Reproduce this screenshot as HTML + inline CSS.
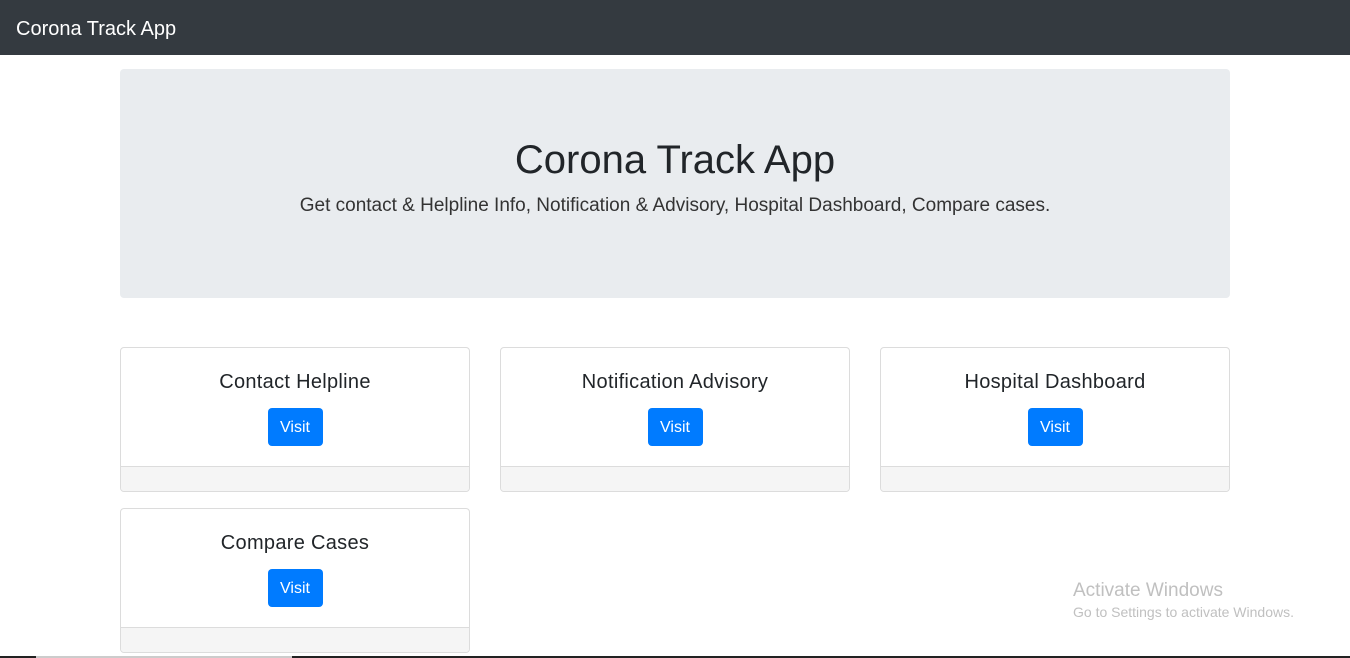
<!DOCTYPE html>
<html><head><style>
*{box-sizing:border-box;margin:0;padding:0}
body{width:1350px;height:658px;overflow:hidden;background:#fff;font-family:"Liberation Sans",sans-serif;color:#212529;position:relative}
.nav{height:55px;background:#343a40;color:#fff;font-size:20px;padding:17px 16px;line-height:24px}
.jumbo{position:absolute;left:120px;top:69px;width:1110px;height:229px;background:#e9ecef;border-radius:4px;text-align:center}
.jumbo h1{font-size:40px;font-weight:500;margin-top:68px;line-height:46px}
.jumbo p{font-size:19px;font-weight:300;margin-top:12px;color:#333}
.card{position:absolute;width:350px;height:145px;border:1px solid #dcdcdc;border-radius:4px;text-align:center;overflow:hidden}
.card h5{font-size:20px;font-weight:500;margin-top:22px;line-height:24px;letter-spacing:0.3px}
.btn{display:inline-block;width:55px;height:38px;background:#007bff;color:#fff;border-radius:4px;font-size:16px;line-height:39px;margin-top:14px}
.foot{position:absolute;left:0;right:0;bottom:0;height:25px;background:#f5f5f5;border-top:1px solid #dcdcdc}
.win{position:absolute;left:1073px;top:580px;color:#c0c0c0}
</style></head><body>
<div class="nav">Corona Track App</div>
<div class="jumbo"><h1>Corona Track App</h1><p>Get contact &amp; Helpline Info, Notification &amp; Advisory, Hospital Dashboard, Compare cases.</p></div>
<div class="card" style="left:120px;top:347px"><h5>Contact Helpline</h5><span class="btn">Visit</span><div class="foot"></div></div>
<div class="card" style="left:500px;top:347px"><h5>Notification Advisory</h5><span class="btn">Visit</span><div class="foot"></div></div>
<div class="card" style="left:880px;top:347px"><h5>Hospital Dashboard</h5><span class="btn">Visit</span><div class="foot"></div></div>
<div class="card" style="left:120px;top:508px"><h5>Compare Cases</h5><span class="btn">Visit</span><div class="foot"></div></div>
<div class="win"><div style="font-size:19px">Activate Windows</div><div style="font-size:14px;margin-top:2px">Go to Settings to activate Windows.</div></div>
<div style="position:absolute;left:0;top:656px;width:1350px;height:2px;background:#222"></div>
<div style="position:absolute;left:36px;top:656px;width:256px;height:2px;background:#ccc"></div>
</body></html>
